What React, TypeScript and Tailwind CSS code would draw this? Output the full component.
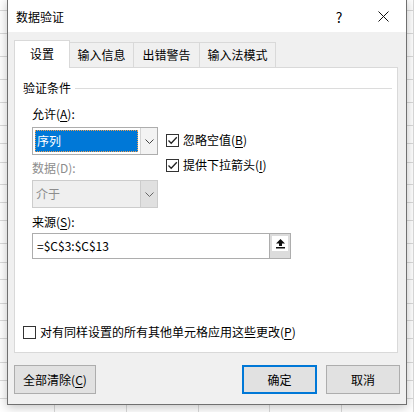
import type { ReactNode } from "react"

/* spreadsheet rows peeking out behind the dialog */
const rowClasses = [
  "h-[11px]", "h-[23px]", "h-[23px]", "h-[23px]", "h-[23px]", "h-[23px]",
  "h-[18px]", "h-[19px]", "h-[22px]", "h-[18px]", "h-[18px]", "h-[23px]",
  "h-[19px]", "h-[17px]", "h-[24px]", "h-[17px]", "h-[18px]", "h-[24px]",
  "h-[18px]", "h-[18px]", "h-[20px]",
]
const colClasses = ["w-[55px]", "w-[72px]", "w-[72px]", "w-[72px]", "w-[72px]", "w-[72px]"]

function Chevron({ color = "#444" }: { color?: string }) {
  return (
    <svg width="9" height="5" viewBox="0 0 9 5" fill="none">
      <path d="M0.5 0.5L4.5 4.5L8.5 0.5" stroke={color} strokeWidth="1" />
    </svg>
  )
}

function Check() {
  return (
    <svg width="11" height="11" viewBox="0 0 11 11" fill="none">
      <path d="M1.5 5.5L4.2 8.3L9.8 2.2" stroke="#222" strokeWidth="1.3" />
    </svg>
  )
}

function Checkbox({ checked, children }: { checked?: boolean; children: ReactNode }) {
  return (
    <div className="flex items-center h-[16px]">
      <div className="w-[13px] h-[13px] border border-[#333] bg-white flex items-center justify-center">
        {checked && <Check />}
      </div>
      <span className="ml-[4px] leading-[16px]">{children}</span>
    </div>
  )
}

export default function App() {
  return (
    <div className="relative w-[414px] h-[412px] overflow-hidden bg-white font-['Noto_Sans_CJK_SC',sans-serif] text-[12px] text-black">
      {/* sheet grid */}
      <div className="flex flex-col">
        {rowClasses.map((h, i) => (
          <div key={i} className={`${h} flex border-b border-[#dadada]`}>
            {colClasses.map((w, j) => (
              <div key={j} className={`${w} h-full border-r border-[#dadada]`} />
            ))}
          </div>
        ))}
      </div>

      {/* dialog */}
      <div className="absolute left-[7px] top-[-1px] w-[400px] h-[406px] border border-[#707070] bg-[#f0f0f0] shadow-[0_2px_10px_rgba(0,0,0,0.25)] flex flex-col">
        {/* title bar */}
        <div className="h-[32px] bg-white flex items-center pl-[8px] pt-[1px]">
          <span className="leading-[16px]">数据验证</span>
          <span className="ml-auto w-[10px] text-center text-[14px] leading-[16px] mr-[33px]">?</span>
          <div className="w-[12px] h-[12px] mr-[17px] flex items-center justify-center">
            <svg width="11" height="11" viewBox="0 0 11 11" fill="none">
              <path d="M0.5 0.5L10.5 10.5M10.5 0.5L0.5 10.5" stroke="#111" strokeWidth="1" />
            </svg>
          </div>
        </div>

        <div className="flex-1 flex flex-col px-[6px] pt-[8px]">
          {/* tabs */}
          <div className="flex items-end h-[28px] relative z-10">
            <div className="w-[56px] h-[28px] bg-white border border-b-0 border-[#d9d9d9] flex items-center justify-center pb-[1px]">
              设置
            </div>
            <div className="w-[64px] h-[25px] border-t border-r border-[#d9d9d9] mb-[1px] flex items-center justify-center">
              输入信息
            </div>
            <div className="w-[66px] h-[25px] border-t border-r border-[#d9d9d9] mb-[1px] flex items-center justify-center">
              出错警告
            </div>
            <div className="w-[76px] h-[25px] border-t border-r border-[#d9d9d9] mb-[1px] flex items-center justify-center">
              输入法模式
            </div>
          </div>

          {/* panel */}
          <div className="-mt-[1px] w-[384px] h-[286px] bg-white border border-[#d9d9d9] flex flex-col">
            <div className="mt-[12px] h-[16px] flex items-center pl-[8px] pr-[5px]">
              <span className="leading-[16px]">验证条件</span>
              <div className="flex-1 ml-[4px] h-px bg-[#dcdcdc]" />
            </div>

            <div className="flex pl-[17px] mt-[10px]">
              <div className="w-[126px] flex flex-col">
                <div className="h-[16px] leading-[16px]">
                  允许(<span className="underline underline-offset-2">A</span>):
                </div>
                <div className="mt-[5px] h-[28px] border border-[#adadad] bg-white flex">
                  <div className="flex-1 p-[2px]">
                    <div className="h-full bg-[#0078d7] text-white border border-dotted border-[#f0a050] flex items-center pl-[1px] leading-[16px]">
                      序列
                    </div>
                  </div>
                  <div className="w-[17px] bg-[#f3f3f3] border-l border-[#d4d4d4] flex items-center justify-center">
                    <Chevron />
                  </div>
                </div>
                <div className="mt-[5px] h-[16px] leading-[16px] text-[#8d8d8d]">数据(D):</div>
                <div className="mt-[4px] h-[28px] border border-[#cccccc] bg-[#efefef] flex">
                  <div className="flex-1 flex items-center pl-[3px] text-[#8d8d8d] leading-[16px]">介于</div>
                  <div className="w-[17px] bg-[#e0e0e0] border-l border-[#cccccc] flex items-center justify-center">
                    <Chevron color="#666" />
                  </div>
                </div>
              </div>

              <div className="ml-[8px] pt-[26px] flex flex-col gap-[9px]">
                <Checkbox checked>
                  忽略空值(<span className="underline underline-offset-2">B</span>)
                </Checkbox>
                <Checkbox checked>
                  提供下拉箭头(<span className="underline underline-offset-2">I</span>)
                </Checkbox>
              </div>
            </div>

            <div className="pl-[17px] mt-[6px] h-[16px] leading-[16px]">
              来源(<span className="underline underline-offset-2">S</span>):
            </div>
            <div className="ml-[17px] mt-[3px] w-[259px] h-[26px] border border-[#adadad] bg-white flex">
              <div className="flex-1 flex items-center pl-[4px] leading-[16px]">=$C$3:$C$13</div>
              <div className="w-[21px] bg-[#dcdcdc] border-l border-[#adadad] flex flex-col items-center pt-[2px]">
                <div className="w-[16px] h-[15px] bg-white flex items-center justify-center">
                  <svg width="9" height="10" viewBox="0 0 9 10" fill="#111">
                    <path d="M4.5 0L9 4.5H6V7H3V4.5H0Z" />
                    <rect x="0" y="8" width="9" height="1.5" />
                  </svg>
                </div>
              </div>
            </div>

            <div className="mt-[65px] pl-[8px]">
              <Checkbox>
                对有同样设置的所有其他单元格应用这些更改(<span className="underline underline-offset-2">P</span>)
              </Checkbox>
            </div>
          </div>

          {/* buttons */}
          <div className="mt-[12px] flex items-center">
            <button className="w-[82px] h-[29px] bg-[#e1e1e1] border border-[#adadad] leading-[16px]">
              全部清除(<span className="underline underline-offset-2">C</span>)
            </button>
            <button className="ml-auto w-[75px] h-[29px] bg-[#e1e1e1] border-2 border-[#0078d7] leading-[16px]">
              确定
            </button>
            <button className="ml-[9px] w-[74px] h-[29px] bg-[#e1e1e1] border border-[#adadad] leading-[16px]">
              取消
            </button>
          </div>
        </div>
      </div>
    </div>
  )
}
